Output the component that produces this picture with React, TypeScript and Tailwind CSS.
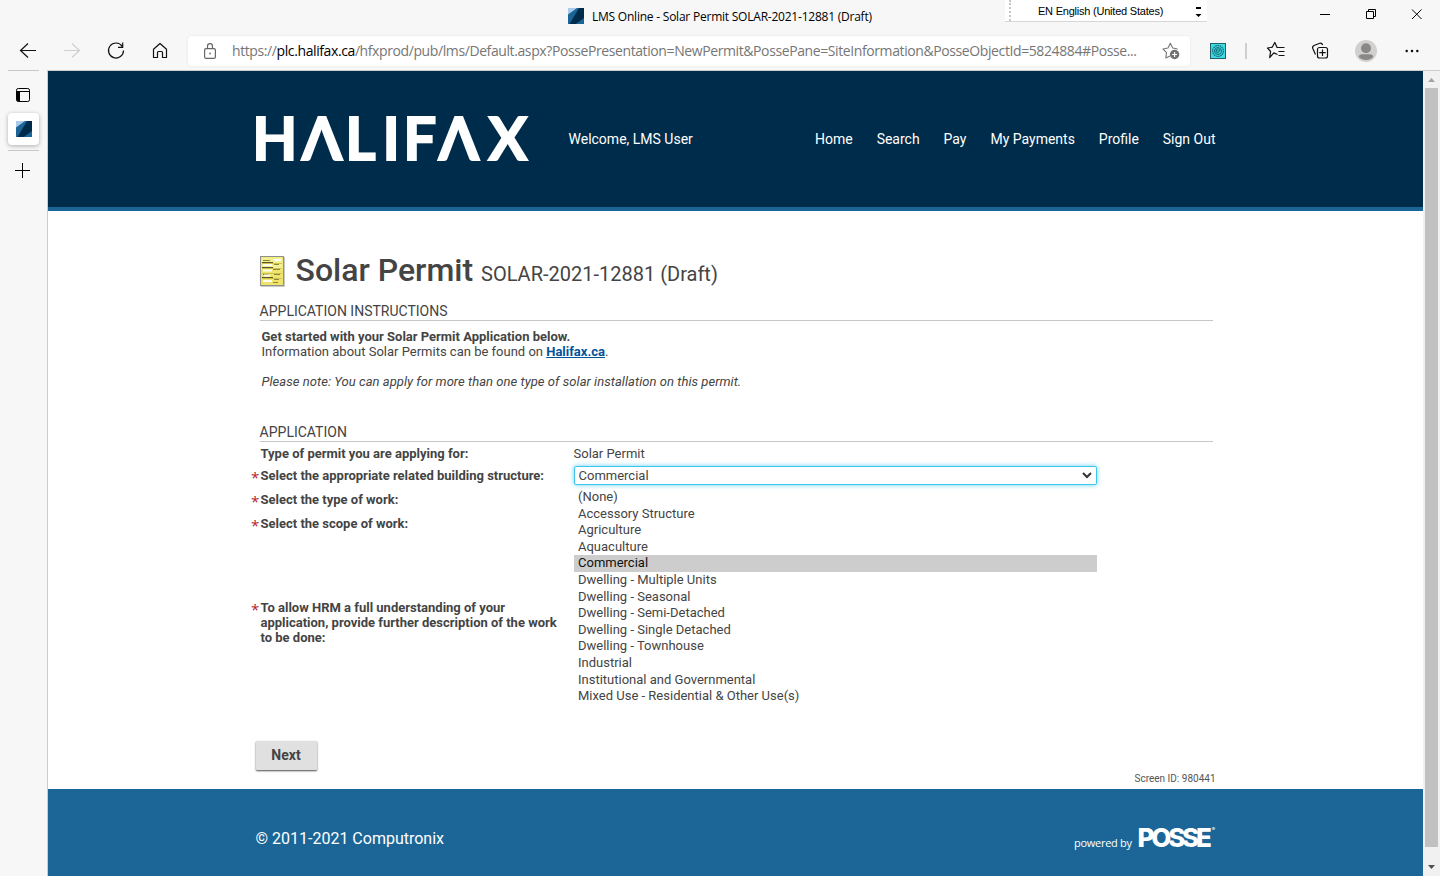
import React from 'react';

const options = [
  '(None)',
  'Accessory Structure',
  'Agriculture',
  'Aquaculture',
  'Commercial',
  'Dwelling - Multiple Units',
  'Dwelling - Seasonal',
  'Dwelling - Semi-Detached',
  'Dwelling - Single Detached',
  'Dwelling - Townhouse',
  'Industrial',
  'Institutional and Governmental',
  'Mixed Use - Residential & Other Use(s)',
];

function Favicon() {
  return (
    <svg width="16" height="16" viewBox="0 0 16 16" className="block shrink-0">
      <rect width="16" height="16" fill="#1b6697" />
      <path d="M0 0H9L0 6.5Z" fill="#a9cbee" />
      <path d="M11 0H16V10L8 16H1.5Z" fill="#002c4b" />
      <path d="M16 10.5V16H8Z" fill="#1b6697" />
    </svg>
  );
}

function TitleBar() {
  return (
    <div className="flex h-8 shrink-0 items-start">
      <div className="ml-[568px] mt-2 flex w-[437px] items-start">
        <Favicon />
        <span className="ml-2 mt-px whitespace-nowrap font-['Open_Sans',sans-serif] text-[12px] leading-4 tracking-[-0.225px] text-black">
          LMS Online - Solar Permit SOLAR-2021-12881 (Draft)
        </span>
      </div>
      <div className="flex h-[22px] w-[202px] items-center border-b border-[#d6d6d6] bg-white">
        <span className="ml-1 h-full w-0.5 border-l-2 border-dotted border-[#c4c4c4]" />
        <span className="ml-[27px] w-[126px] whitespace-nowrap font-['Liberation_Sans',sans-serif] text-[11px] leading-[22px] tracking-[-0.22px] text-black">
          EN English (United States)
        </span>
        <svg width="7" height="11" viewBox="0 0 7 11" className="ml-[31px] mt-[3px]">
          <path d="M1 0H6V2H1ZM0.500 7H6.500L3.500 10Z" fill="#000" />
        </svg>
      </div>
      <div className="ml-[95px] flex h-7 w-[138px] items-center">
        <svg width="138" height="28" viewBox="0 0 138 28" fill="none" stroke="#000" className="block">
          <path d="M18 14.5H28" />
          <path d="M64.500 11.500H71.500V18.500H64.500ZM66.500 11V9.500H73.500V16.500H72" />
          <path d="M110 9.500L119.500 19M119.500 9.500L110 19" />
        </svg>
      </div>
    </div>
  );
}

function ToolButton({ children }: { children: React.ReactNode }) {
  return (
    <button className="flex h-[38px] w-11 items-center justify-center">
      <svg width="24" height="24" viewBox="0 0 24 24" fill="none" stroke="#111" strokeWidth="1.2" className="block">
        {children}
      </svg>
    </button>
  );
}

function Toolbar() {
  return (
    <div className="flex h-[38px] shrink-0 items-center pl-1.5">
      <ToolButton>
        <path d="M20 11.500H4.500M12 4.500L4.500 11.500L12 18.500" />
      </ToolButton>
      <ToolButton>
        <path d="M4 11.500H19.500M12 4.500L19.500 11.500L12 18.500" stroke="#cfcfcf" />
      </ToolButton>
      <ToolButton>
        <path d="M18.200 7.300A7.500 7.500 0 1 0 19.500 11.500M18.700 3.500V8.300H14" />
      </ToolButton>
      <ToolButton>
        <path d="M5.500 18.500V10.300L12 4.500L18.500 10.300V18.500H14.500V13.500Q14.500 12.500 13.500 12.500H10.500Q9.500 12.500 9.500 13.500V18.500Z" strokeLinejoin="round" />
      </ToolButton>
      <div className="ml-1.5 flex h-[30px] w-[1002px] items-center rounded bg-white pl-4 shadow-[0_0_3px_rgba(0,0,0,0.08)]">
        <svg width="12" height="16" viewBox="0 0 12 16" fill="none" stroke="#666" strokeWidth="1.2" className="block">
          <rect x="0.600" y="5.600" width="10.800" height="9.800" rx="1.500" />
          <path d="M3.500 5.500V3.200A2.500 2.500 0 0 1 8.500 3.200V5.500" />
          <rect x="5.200" y="9.700" width="1.600" height="1.600" fill="#666" stroke="none" />
        </svg>
        <span className="ml-4 w-[930px] whitespace-nowrap font-['Open_Sans',sans-serif] text-[14px] leading-5 tracking-[-0.4px] text-[#767676]">
          https://<span className="text-black">plc.halifax.ca</span>
          /hfxprod/pub/lms/Default.aspx?PossePresentation=NewPermit&amp;PossePane=SiteInformation&amp;PosseObjectId=5824884#Posse...
        </span>
        <svg width="18" height="18" viewBox="0 0 18 18" fill="none" stroke="#777" strokeWidth="1.100" className="block">
          <path d="M8 14L3.800 16L4.500 10.600L1 7L6 6L8.300 1.300L10.700 6L15.700 7" strokeLinejoin="round" />
          <circle cx="12.600" cy="12.500" r="4.700" fill="#707070" stroke="none" />
          <path d="M12.600 10V15M10.100 12.500H15.100" stroke="#fff" />
        </svg>
      </div>
      <div className="ml-5 flex items-center">
        <svg width="16" height="16" viewBox="0 0 16 16" fill="none" className="block">
          <rect x="0.500" y="0.500" width="15" height="15" fill="#3cdce4" stroke="#245f68" />
          <circle cx="8" cy="8" r="5.400" stroke="#176b78" strokeWidth="1.300" strokeDasharray="1.600 0.600" />
          <circle cx="8" cy="8" r="3.500" stroke="#176b78" />
          <path d="M6 8H10A2 2 0 1 0 8.800 9.700" stroke="#176b78" />
        </svg>
        <span className="ml-[19px] h-4 w-0.5 bg-[#cfcfcf]" />
      </div>
      <div className="ml-[7px] flex">
        <ToolButton>
          <path d="M13.500 15.500L9.800 13.900L5.700 18.500L6.600 12.500L3.500 9L8.200 8.200L10.800 3.500L13.100 8.500H20.500M14.500 12.500H20.500M14.500 16.500H20.500" strokeLinejoin="round" />
        </ToolButton>
        <ToolButton>
          <rect x="9.500" y="8.500" width="10" height="10.500" rx="2" />
          <path d="M14.500 10.500V17M11.300 13.700H17.700M7.500 15.500L4.800 9.500Q4 7.500 6 6.500L11.800 4.200Q13.800 3.600 14.700 6" />
        </ToolButton>
        <button className="flex h-[38px] w-12 items-center justify-center">
          <svg width="22" height="22" viewBox="0 0 22 22" className="block">
            <circle cx="11" cy="11" r="11" fill="#d2d0ce" />
            <circle cx="11" cy="8.300" r="5" fill="#8a8886" />
            <path d="M3.800 17Q4 14.300 7 14.300H15Q18 14.300 18.200 17Q15.500 20 11 20T3.800 17Z" fill="#8a8886" />
          </svg>
        </button>
        <ToolButton>
          <g fill="#111" stroke="none">
            <rect x="5.500" y="10.800" width="2.400" height="2.400" rx="1" />
            <rect x="10.800" y="10.800" width="2.400" height="2.400" rx="1" />
            <rect x="16.100" y="10.800" width="2.400" height="2.400" rx="1" />
          </g>
        </ToolButton>
      </div>
    </div>
  );
}

function SideTabs() {
  return (
    <aside className="flex w-[47px] shrink-0 flex-col pl-2">
      <div className="h-px w-[31px] bg-[#c8c8c8]" />
      <svg width="14" height="14" viewBox="0 0 14 14" className="ml-2 mt-[17px] block">
        <rect x="0.500" y="0.500" width="13" height="13" rx="1.800" fill="none" stroke="#000" />
        <path d="M0.500 3.500H13.500" stroke="#000" />
        <path d="M0.500 3.500H4V13.500H2L0.500 12Z" fill="#000" />
      </svg>
      <div className="mt-[11px] flex h-8 w-[31px] items-center justify-center rounded bg-white shadow-[0_1px_4px_rgba(0,0,0,0.3)]">
        <Favicon />
      </div>
      <div className="mt-[5px] h-px w-[31px] bg-[#c8c8c8]" />
      <svg width="15" height="15" viewBox="0 0 15 15" className="ml-[7px] mt-3 block">
        <path d="M0 7.500H15M7.500 0V15" stroke="#000" />
      </svg>
    </aside>
  );
}

function HalifaxLogo() {
  return (
    <svg width="288" height="76" viewBox="-8 -12 288 76" aria-label="HALIFAX" className="block overflow-visible">
      <text
        x="-3.700 45.700 89.300 126.400 147.200 182.400 232.300"
        y="45.100"
        fill="#fff"
        stroke="#fff"
        strokeWidth="1.800"
        className="font-['Lato',sans-serif] text-[58.500px] font-bold"
      >
        HΛLIFΛX
      </text>
    </svg>
  );
}

function SiteHeader() {
  return (
    <header className="flex h-[140px] shrink-0 items-start border-b-4 border-[#1b6697] bg-[#002c4b] text-[14px] leading-4 text-white">
      <div className="ml-[200px] mt-8 w-[288px]">
        <HalifaxLogo />
      </div>
      <span className="ml-[32.500px] mt-[60px] w-[246.500px] whitespace-nowrap">Welcome, LMS User</span>
      <nav className="mt-[60px] flex gap-[23.950px] whitespace-nowrap">
        <a>Home</a>
        <a>Search</a>
        <a>Pay</a>
        <a>My Payments</a>
        <a>Profile</a>
        <a>Sign Out</a>
      </nav>
    </header>
  );
}

function FormIcon() {
  return (
    <svg width="26" height="32" viewBox="0 0 26 32" className="block">
      <rect x="0.500" y="0.500" width="23" height="29" fill="#efe56c" stroke="#8f8f8c" />
      <rect x="1.500" y="1.500" width="21" height="12" fill="#f4f193" />
      <path d="M2 7.500H22M2 12.500H22M2 17.500H22M2 22.500H22" stroke="#cfc350" />
      <path d="M2 6.500H13M2 11.500H13M2 21.500H13" stroke="#5a5530" />
      <path d="M3 4.500H10M14 8.500H19M13 13.500H20M3 18.500H9M14 18.500H20M14 23.500H19M13 26.500H18" stroke="#8d8540" />
      <path d="M14 4H21M3 9H12M3 14.500H12M4 19.500H10M3 25H12" stroke="#fdfdf0" strokeWidth="2" />
      <path d="M1 30.500H24.500V1" fill="none" stroke="#c8c8c8" />
    </svg>
  );
}

function SectionTitle({ children }: { children: React.ReactNode }) {
  return (
    <h2 className="ml-[3px] h-[18px] w-[953px] border-b border-[#c6c6c6] text-[14px] leading-4">
      <span className="-ml-[0.400px]">{children}</span>
    </h2>
  );
}

function Label({ required, children }: { required?: boolean; children: React.ReactNode }) {
  return (
    <div className="flex w-[323.500px] shrink-0 font-bold">
      <span className="w-[10px] shrink-0 pt-[2px] pl-[0.500px] font-['Open_Sans',sans-serif] text-[15px] font-normal leading-[15px] text-[#b3202a]">
        {required ? '*' : ''}
      </span>
      <span className="w-[300px]">{children}</span>
    </div>
  );
}

function StructureSelect() {
  return (
    <div className="relative h-[19px] w-[523px]">
      <div className="flex h-[19px] items-center justify-between rounded-[2px] border border-[#3fc4ee] bg-white pl-[3.500px] pr-[4px] shadow-[0_0_5px_rgba(63,196,238,0.8)]">
        <span>Commercial</span>
        <svg width="10" height="7" viewBox="0 0 10 7" className="block">
          <path d="M1 1L5 5L9 1" fill="none" stroke="#333" strokeWidth="2" />
        </svg>
      </div>
      <ul className="absolute left-0 top-[23px] w-[523px] bg-white">
        {options.map((option) => (
          <li
            key={option}
            className={
              option === 'Commercial'
                ? 'h-[16.600px] bg-[#cdcdcd] pl-1 leading-[15px] text-[#101010]'
                : 'h-[16.600px] pl-1 leading-[15px]'
            }
          >
            {option}
          </li>
        ))}
      </ul>
    </div>
  );
}

function PermitForm() {
  return (
    <main className="flex h-[578px] shrink-0 flex-col pl-[209px] text-[13px] leading-[15px] text-[#444]">
      <div className="mt-[45px] flex h-[47px] items-start whitespace-nowrap pl-[3px] text-[#444]">
        <FormIcon />
        <h1 className="-mt-[5px] ml-[9.500px] text-[32px] font-medium leading-[38px]">
          Solar Permit <span className="text-[20px] font-normal">SOLAR-2021-12881 (Draft)</span>
        </h1>
      </div>
      <SectionTitle>APPLICATION INSTRUCTIONS</SectionTitle>
      <div className="mt-2 pl-[4.500px]">
        <p className="font-bold">Get started with your Solar Permit Application below.</p>
        <p>
          Information about Solar Permits can be found on <a className="font-bold text-[#00529b] underline">Halifax.ca</a>.
        </p>
        <p className="mt-[15px] italic tracking-[0.045px]">
          Please note: You can apply for more than one type of solar installation on this permit.
        </p>
      </div>
      <div className="mt-[35px]">
        <SectionTitle>APPLICATION</SectionTitle>
      </div>
      <div className="-ml-[6.500px] flex flex-col">
        <div className="mt-1 flex h-5">
          <Label>Type of permit you are applying for:</Label>
          <span className="-ml-[0.500px]">Solar Permit</span>
        </div>
        <div className="flex h-6">
          <div className="pt-[2px]">
            <Label required>Select the appropriate related building structure:</Label>
          </div>
          <StructureSelect />
        </div>
        <div className="flex h-6 pt-[2px]">
          <Label required>Select the type of work:</Label>
        </div>
        <div className="flex h-[84px] pt-[2px]">
          <Label required>Select the scope of work:</Label>
        </div>
        <div className="flex h-[139px] pt-[2px]">
          <Label required>
            To allow HRM a full understanding of your application, provide further description of the work to be done:
          </Label>
        </div>
      </div>
      <button className="-ml-px mt-[4px] h-[29px] w-[61px] shrink-0 rounded-[1px] bg-[#e0e0e0] pr-px text-[14px] font-bold leading-[29px] shadow-[0_1px_2px_rgba(0,0,0,0.7)]">
        Next
      </button>
      <p className="mt-[3px] w-[958.500px] text-right text-[10px] leading-3 text-[#555]">Screen ID: 980441</p>
    </main>
  );
}

function SiteFooter() {
  return (
    <footer className="flex flex-1 items-start bg-[#1b6697] pl-[207.500px] text-white">
      <span className="mt-10 w-[818.500px] text-[16px] leading-[19px]">© 2011-2021 Computronix</span>
      <span className="mt-[46px] w-[63.500px] whitespace-nowrap font-['Open_Sans',sans-serif] text-[11px] leading-[15px] tracking-[-0.28px]">
        powered by
      </span>
      <span className="mt-[33px] flex whitespace-nowrap font-['Inter',sans-serif] text-[26px] font-extrabold leading-8 tracking-[-3.200px]">
        POSSE
        <span className="ml-[3px] mt-[4px] text-[5px] leading-[6px] tracking-normal">®</span>
      </span>
    </footer>
  );
}

function Scrollbar() {
  return (
    <div className="flex w-[17px] shrink-0 flex-col items-center bg-[#f1f1f1]">
      <svg width="17" height="17" viewBox="0 0 17 17" className="block shrink-0">
        <path d="M5 11H12L8.500 7Z" fill="#a3a3a3" />
      </svg>
      <div className="h-[759px] w-[13px] shrink-0 bg-[#c1c1c1]" />
      <svg width="17" height="29" viewBox="0 0 17 29" className="block shrink-0">
        <path d="M5 18H12L8.500 22Z" fill="#505050" />
      </svg>
    </div>
  );
}

export default function App() {
  return (
    <div className="flex h-[876px] w-[1440px] flex-col overflow-hidden bg-[#f7f7f7] font-['Roboto',sans-serif]">
      <TitleBar />
      <Toolbar />
      <div className="flex min-h-0 flex-1">
        <SideTabs />
        <div className="flex min-w-0 flex-1 border-l border-t border-[#cdcdcd]">
          <div className="flex min-w-0 flex-1 flex-col bg-white">
            <SiteHeader />
            <PermitForm />
            <SiteFooter />
          </div>
          <Scrollbar />
        </div>
      </div>
    </div>
  );
}
